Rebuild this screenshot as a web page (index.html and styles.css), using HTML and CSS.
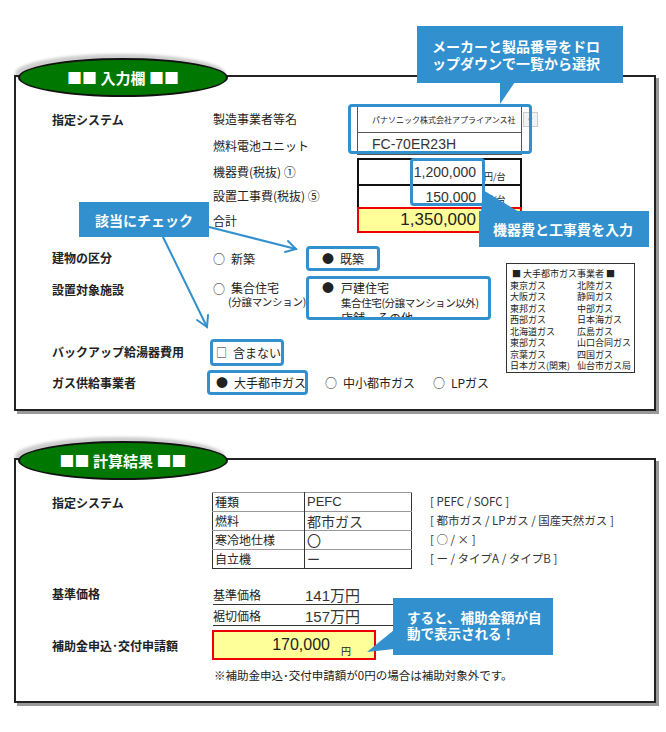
FILE: index.html
```html
<!DOCTYPE html>
<html lang="ja">
<head>
    <meta charset="UTF-8">
    <title>補助金額の試算</title>
    <link rel="stylesheet" href="styles.css">
</head>
<body>
<div class="page">

    <section class="panel panel-input">
        <div class="tab">■■ 入力欄 ■■</div>

        <div class="sys">
            <div class="label sys-label">指定システム</div>
            <div class="sub">製造事業者等名</div>
            <div class="cell cell-maker">パナソニック株式会社アプライアンス社</div>
            <div class="drop">▾</div>
            <div class="sub">燃料電池ユニット</div>
            <div class="cell cell-unit num">FC-70ER23H</div>
            <div></div>
            <div class="sub">機器費(税抜) ①</div>
            <div class="cell cell-price"><span class="num">1,200,000</span><span class="yen">円/台</span></div>
            <div></div>
            <div class="sub">設置工事費(税抜) ⑤</div>
            <div class="cell cell-price"><span class="num">150,000</span><span class="yen">円/台</span></div>
            <div></div>
            <div class="sub">合計</div>
            <div class="cell cell-total num">1,350,000</div>
            <div></div>
        </div>

        <div class="opts">
            <div class="label">建物の区分</div>
            <div class="choices">
                <span class="choice w93"><span class="mark">○</span>新築</span>
                <span class="choice pick pick-build"><span class="mark">●</span>既築</span>
            </div>

            <div class="gas-list">
                <div class="gas-title">■ 大手都市ガス事業者 ■</div>
                <div>東京ガス</div><div>北陸ガス</div>
                <div>大阪ガス</div><div>静岡ガス</div>
                <div>東邦ガス</div><div>中部ガス</div>
                <div>西部ガス</div><div>日本海ガス</div>
                <div>北海道ガス</div><div>広島ガス</div>
                <div>東部ガス</div><div>山口合同ガス</div>
                <div>京葉ガス</div><div>四国ガス</div>
                <div>日本ガス(関東)</div><div>仙台市ガス局</div>
            </div>

            <div class="label label-top">設置対象施設</div>
            <div class="choices choices-top">
                <span class="choice w93 multi">
                    <span class="mark">○</span>
                    <span class="lines"><span>集合住宅</span><span class="small">(分譲マンション)</span></span>
                </span>
                <span class="choice pick pick-facility multi">
                    <span class="mark">●</span>
                    <span class="lines"><span>戸建住宅</span><span class="tight">集合住宅(分譲マンション以外)</span><span>店舗、その他</span></span>
                </span>
            </div>

            <div class="label">バックアップ給湯器費用</div>
            <div class="choices">
                <span class="choice pick pick-backup"><span class="mark box">□</span>含まない</span>
            </div>
        </div>

        <div class="gas-row">
            <div class="label">ガス供給事業者</div>
            <div class="choices">
                <span class="choice pick pick-gas"><span class="mark">●</span>大手都市ガス</span>
                <span class="choice w108"><span class="mark">○</span>中小都市ガス</span>
                <span class="choice"><span class="mark">○</span>LPガス</span>
            </div>
        </div>
    </section>

    <section class="panel panel-result">
        <div class="tab">■■ 計算結果 ■■</div>

        <div class="spec">
            <div class="label">指定システム</div>
            <table class="spec-table">
                <tr><td>種類</td><td class="v num">PEFC</td></tr>
                <tr><td>燃料</td><td class="v big">都市ガス</td></tr>
                <tr><td>寒冷地仕様</td><td class="v big">〇</td></tr>
                <tr><td>自立機</td><td class="v">ー</td></tr>
            </table>
            <div class="notes">
                <div>[ PEFC / SOFC ]</div>
                <div>[ 都市ガス / LPガス / 国産天然ガス ]</div>
                <div>[ ○ / × ]</div>
                <div>[ ー / タイプA / タイプB ]</div>
            </div>
        </div>

        <div class="base">
            <div class="label">基準価格</div>
            <div class="base-list">
                <div class="base-row"><span class="sub-w">基準価格</span><span class="man num">141万円</span></div>
                <div class="base-row"><span class="sub-w">裾切価格</span><span class="man num">157万円</span></div>
            </div>
        </div>

        <div class="subsidy">
            <div class="label">補助金申込･交付申請額</div>
            <div class="subsidy-box"><span class="num">170,000</span><span class="yen-s">円</span></div>
        </div>
        <div class="note">※補助金申込･交付申請額が0円の場合は補助対象外です。</div>
    </section>

    <div class="hl hl-maker"></div>
    <div class="hl hl-price"></div>

    <svg class="overlay" width="666" height="732" viewBox="0 0 666 732">
        <g fill="#3190cd">
            <polygon points="500,82 515,82 500,104"/>
            <polygon points="483,190 519,212 481,212"/>
            <polygon points="367,652 394,630 394,649"/>
        </g>
        <g stroke="#3190cd" stroke-width="2" fill="none" stroke-linecap="round">
            <line x1="209" y1="227" x2="296" y2="249"/>
            <polyline points="285,252 296,249 288,241"/>
            <line x1="163" y1="237" x2="207" y2="327"/>
            <polyline points="197,320 207,327 208,315"/>
        </g>
    </svg>

    <div class="callout c-dropdown">メーカーと製品番号をドロ<br>ップダウンで一覧から選択</div>
    <div class="callout c-price">機器費と工事費を入力</div>
    <div class="callout c-check">該当にチェック</div>
    <div class="callout c-auto">すると、補助金額が自<br>動で表示される！</div>

</div>
</body>
</html>
```

FILE: styles.css
```css
body {
    margin: 0;
    background: #fff;
    font-family: "Noto Sans CJK JP", sans-serif;
    font-size: 12px;
    color: #222;
}
.page {
    position: relative;
    width: 666px;
    height: 732px;
    padding-top: 75px;
    box-sizing: border-box;
}
.num {
    font-family: "Liberation Sans", "Noto Sans CJK JP", sans-serif;
}
.label {
    font-weight: bold;
}

/* panels */
.panel {
    position: relative;
    margin-left: 14px;
    width: 642px;
    box-sizing: border-box;
    border: 2px solid #222;
    box-shadow: 3px 3px 0 #999;
    background: #fff;
    padding-left: 36px;
}
.panel-input {
    height: 336px;
    padding-top: 28px;
}
.panel-result {
    height: 245px;
    margin-top: 47px;
    padding-top: 32px;
}
.tab {
    position: absolute;
    left: 2px;
    top: -19px;
    width: 210px;
    height: 39px;
    box-sizing: border-box;
    border: 2px solid #111;
    border-radius: 50%;
    background: #007800;
    color: #fff;
    font-weight: bold;
    font-size: 15px;
    display: flex;
    align-items: center;
    justify-content: center;
    box-shadow: -3px -4px 3px rgba(0, 0, 0, 0.2);
}

/* designated system */
.sys {
    display: grid;
    grid-template-columns: 161px 144px 165px 40px;
    grid-template-rows: 27px 26px 26px 23px 26px;
    align-items: center;
}
.sys-label {
    grid-row: 1 / 6;
    align-self: start;
    line-height: 30px;
}
.cell {
    box-sizing: border-box;
    height: 100%;
    display: flex;
    align-items: center;
}
.cell-maker {
    border: 1px solid #555;
    border-bottom: 0;
    font-size: 8px;
    padding-left: 14px;
}
.cell-unit {
    align-self: start;
    height: 23px;
    border: 1px solid #555;
    font-size: 14px;
    padding-left: 14px;
    color: #333;
}
.drop {
    align-self: start;
    margin-top: 7px;
    margin-left: 1px;
    width: 15px;
    height: 15px;
    box-sizing: border-box;
    border: 1px solid #ccc;
    background: #f2f2f2;
    color: #999;
    font-size: 9px;
    line-height: 13px;
    text-align: center;
}
.cell-price {
    border: 2px solid #111;
    border-bottom: 0;
    justify-content: flex-end;
    padding-right: 10px;
    font-size: 14px;
    color: #333;
}
.cell-total {
    border: 2px solid #e00;
    background: #ffff99;
    justify-content: flex-end;
    padding-right: 44px;
    font-size: 17px;
}
.yen {
    align-self: flex-end;
    width: 26px;
    margin-left: 8px;
    font-size: 9px;
    line-height: 11px;
    padding-bottom: 2px;
    color: #222;
}

/* options */
.opts {
    display: grid;
    grid-template-columns: 161px 293px 129px;
    grid-template-rows: 33px 61px 27px;
    margin-top: 10px;
}
.opts .label {
    line-height: 30px;
}
.opts .label-top {
    line-height: 28px;
}
.choices {
    display: flex;
    align-items: center;
    height: 30px;
}
.choices-top {
    align-items: flex-start;
    height: auto;
}
.choice {
    display: flex;
    align-items: center;
    white-space: nowrap;
}
.mark {
    width: 12px;
    margin-right: 6px;
    font-size: 12px;
    text-align: center;
}
.mark.box {
    font-size: 11px;
}
.w93 {
    width: 93px;
}
.w108 {
    width: 108px;
}
.multi {
    align-items: flex-start;
}
.lines {
    display: flex;
    flex-direction: column;
    line-height: 15px;
}
.choices-top .w93 {
    padding-top: 5px;
    line-height: 15px;
}
.choices-top .w93 .lines {
    line-height: 14px;
}
.small {
    font-size: 10.5px;
    margin-left: -3px;
    letter-spacing: -0.3px;
}
.tight {
    font-size: 10.5px;
    letter-spacing: -0.4px;
}
.pick {
    box-sizing: border-box;
    border: 3px solid #3190cd;
    border-radius: 4px;
}
.pick-build {
    width: 74px;
    height: 25px;
    padding-left: 13px;
}
.pick-facility {
    width: 185px;
    height: 44px;
    padding: 1px 0 0 13px;
    overflow: hidden;
    line-height: 15px;
}
.pick-facility .mark {
    line-height: 15px;
    margin-right: 7px;
}
.pick-backup {
    width: 74px;
    height: 27px;
    margin-left: -3px;
    padding-left: 3px;
}
.pick-gas {
    width: 101px;
    height: 25px;
    margin-left: -6px;
    margin-right: 17px;
    padding-left: 6px;
}
.gas-list {
    grid-column: 3;
    grid-row: 1 / 4;
    align-self: start;
    margin-top: 20px;
    height: 110px;
    box-sizing: border-box;
    border: 1px solid #333;
    padding: 4px 0 0 3px;
    display: grid;
    grid-template-columns: 67px 1fr;
    font-size: 9px;
    line-height: 11px;
}
.gas-title {
    grid-column: 1 / 3;
    padding-left: 2px;
}
.gas-row {
    display: grid;
    grid-template-columns: 161px 1fr;
    margin-top: 6px;
    align-items: center;
}
.gas-row .choices {
    height: 25px;
}

/* result */
.spec {
    display: grid;
    grid-template-columns: 160px 200px 1fr;
}
.spec .label {
    line-height: 22px;
}
.spec-table {
    width: 200px;
    border-collapse: collapse;
    border: 1px solid #333;
}
.spec-table td {
    height: 18px;
    padding: 0 0 0 2px;
    border-top: 1px solid #999;
    line-height: 18px;
}
.spec-table td:first-child {
    width: 89px;
    border-right: 1px solid #333;
}
.spec-table .v {
    font-size: 13px;
    color: #333;
}
.spec-table .big {
    font-size: 14px;
}
.notes {
    margin-left: 18px;
    line-height: 19px;
    font-size: 11.5px;
    color: #333;
}
.base {
    display: grid;
    grid-template-columns: 161px 180px;
    margin-top: 15px;
}
.base .label {
    line-height: 20px;
}
.base-row {
    display: flex;
    align-items: center;
    height: 20px;
    border-bottom: 1.5px solid #333;
}
.sub-w {
    width: 92px;
}
.man {
    font-size: 15px;
    color: #333;
}
.subsidy {
    display: grid;
    grid-template-columns: 160px 164px;
    align-items: center;
    margin-top: 4px;
}
.subsidy-box {
    height: 30px;
    box-sizing: border-box;
    border: 2px solid #e00;
    background: #ffff99;
    display: flex;
    align-items: center;
    justify-content: flex-end;
    padding-right: 23px;
    font-size: 16px;
}
.yen-s {
    align-self: flex-end;
    font-size: 10px;
    line-height: 14px;
    margin-left: 11px;
}
.note {
    margin: 8px 0 0 162px;
    line-height: 14px;
    font-size: 11.5px;
}

/* callouts and highlights */
.hl {
    position: absolute;
    box-sizing: border-box;
    border: 3px solid #3190cd;
    border-radius: 4px;
}
.hl-maker {
    left: 348px;
    top: 104px;
    width: 184px;
    height: 50px;
}
.hl-price {
    left: 410px;
    top: 158px;
    width: 75px;
    height: 48px;
}
.overlay {
    position: absolute;
    left: 0;
    top: 0;
    pointer-events: none;
}
.callout {
    position: absolute;
    box-sizing: border-box;
    background: #3190cd;
    color: #fff;
    font-weight: bold;
    font-size: 14px;
    line-height: 17px;
    white-space: nowrap;
}
.c-dropdown {
    left: 417px;
    top: 26px;
    width: 206px;
    height: 57px;
    padding: 12px 0 0 15px;
}
.c-price {
    left: 479px;
    top: 211px;
    width: 170px;
    height: 36px;
    padding: 10px 0 0 14px;
}
.c-check {
    left: 79px;
    top: 202px;
    width: 130px;
    height: 35px;
    padding: 10px 0 0 16px;
}
.c-auto {
    left: 393px;
    top: 598px;
    width: 160px;
    height: 57px;
    padding: 11px 0 0 14px;
    font-size: 13.5px;
    line-height: 16px;
}
```
